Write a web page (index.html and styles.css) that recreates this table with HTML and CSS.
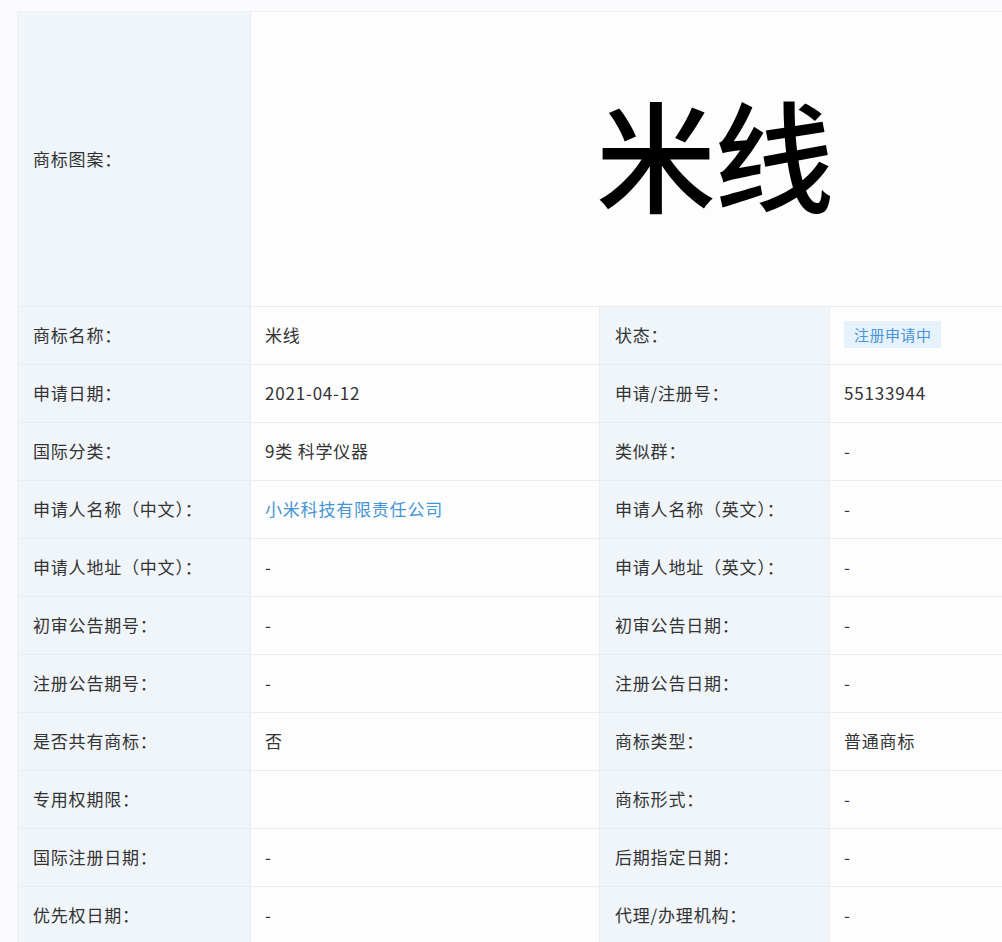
FILE: index.html
```html
<!DOCTYPE html>
<html lang="zh-CN">
<head>
<meta charset="utf-8">
<title>商标详情</title>
<link rel="stylesheet" href="styles.css">
</head>
<body>
<div class="sheet">
  <div class="cell label head-label">商标图案：</div>
  <div class="cell value head-value"><span class="mark">米线</span></div>

  <div class="cell label">商标名称：</div>
  <div class="cell value">米线</div>
  <div class="cell label">状态：</div>
  <div class="cell value"><span class="tag">注册申请中</span></div>

  <div class="cell label">申请日期：</div>
  <div class="cell value">2021-04-12</div>
  <div class="cell label">申请/注册号：</div>
  <div class="cell value">55133944</div>

  <div class="cell label">国际分类：</div>
  <div class="cell value">9类 科学仪器</div>
  <div class="cell label">类似群：</div>
  <div class="cell value">-</div>

  <div class="cell label">申请人名称（中文）：</div>
  <div class="cell value"><a class="link" href="#">小米科技有限责任公司</a></div>
  <div class="cell label">申请人名称（英文）：</div>
  <div class="cell value">-</div>

  <div class="cell label">申请人地址（中文）：</div>
  <div class="cell value">-</div>
  <div class="cell label">申请人地址（英文）：</div>
  <div class="cell value">-</div>

  <div class="cell label">初审公告期号：</div>
  <div class="cell value">-</div>
  <div class="cell label">初审公告日期：</div>
  <div class="cell value">-</div>

  <div class="cell label">注册公告期号：</div>
  <div class="cell value">-</div>
  <div class="cell label">注册公告日期：</div>
  <div class="cell value">-</div>

  <div class="cell label">是否共有商标：</div>
  <div class="cell value">否</div>
  <div class="cell label">商标类型：</div>
  <div class="cell value">普通商标</div>

  <div class="cell label">专用权期限：</div>
  <div class="cell value"></div>
  <div class="cell label">商标形式：</div>
  <div class="cell value">-</div>

  <div class="cell label">国际注册日期：</div>
  <div class="cell value">-</div>
  <div class="cell label">后期指定日期：</div>
  <div class="cell value">-</div>

  <div class="cell label">优先权日期：</div>
  <div class="cell value">-</div>
  <div class="cell label">代理/办理机构：</div>
  <div class="cell value">-</div>
</div>
</body>
</html>
```

FILE: styles.css
```css
html, body {
  margin: 0;
  padding: 0;
  background: #fbfbfd;
  overflow: hidden;
}

body {
  font-family: "Noto Sans CJK SC", "Noto Sans", sans-serif;
  color: #333;
  font-size: 17px;
  letter-spacing: 0.8px;
}

.sheet {
  margin: 11px 0 0 17px;
  width: 1160px;
  display: grid;
  grid-template-columns: 233px 349px 230px 348px;
  grid-template-rows: 295px;
  grid-auto-rows: 58px;
  border-top: 1px solid #eceff3;
  border-left: 1px solid #eceff3;
}

.cell {
  box-sizing: border-box;
  display: flex;
  align-items: center;
  border-right: 1px solid #e9edf1;
  border-bottom: 1px solid #e9edf1;
  padding-left: 15px;
  padding-bottom: 2px;
  line-height: 1;
  white-space: nowrap;
}

.label {
  background: #f0f5fa;
  color: #333;
}

.value {
  background: #fdfdfe;
  color: #333;
  padding-left: 14px;
}

.head-value {
  grid-column: 2 / span 3;
  justify-content: center;
  padding-left: 0;
}

.mark {
  font-size: 120px;
  color: #000;
  font-weight: 500;
  letter-spacing: -2px;
  margin-top: -12px;
}

.tag {
  display: inline-block;
  background: #e5f1fb;
  color: #4b94d6;
  font-size: 15px;
  letter-spacing: 0.5px;
  padding: 6px 9px 6px 10px;
  border-radius: 2px;
}

.link {
  color: #4594d6;
  text-decoration: none;
}
```
